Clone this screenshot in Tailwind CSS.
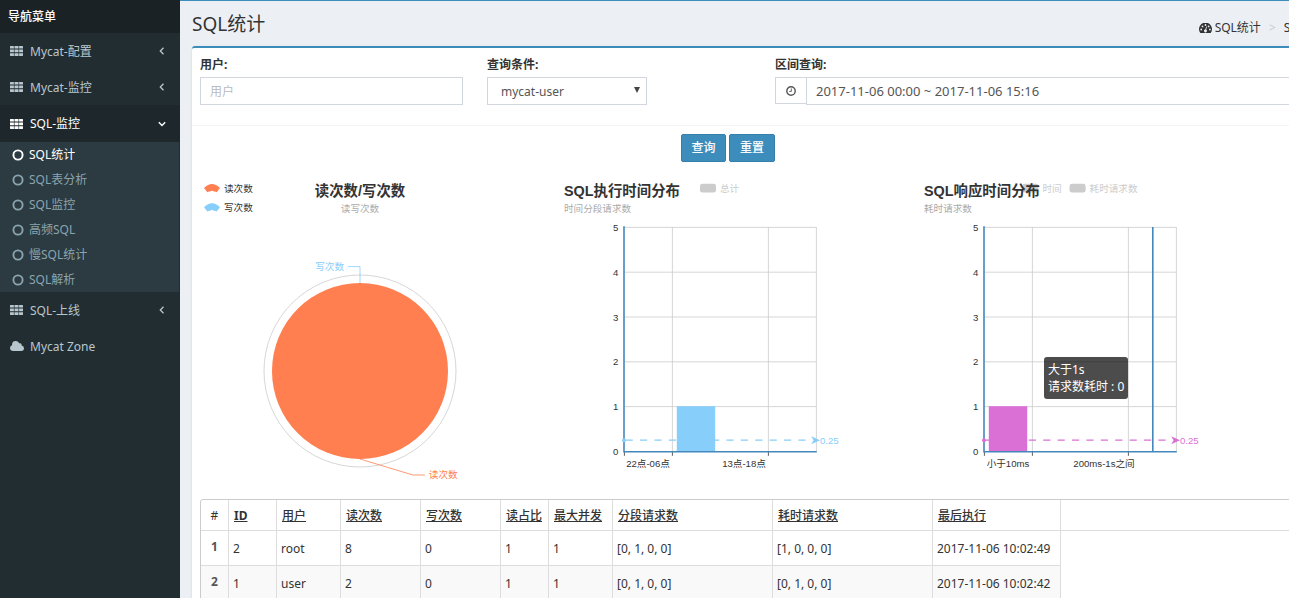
<!DOCTYPE html>
<html lang="zh-CN">
<head>
<meta charset="utf-8">
<title>SQL统计</title>
<script src="https://cdn.jsdelivr.net/npm/@tailwindcss/browser@4"></script>
</head>
<body class="flex min-h-screen overflow-x-hidden bg-[#ecf0f5] font-['Noto_Sans','Noto_Sans_CJK_SC',sans-serif] text-xs text-[#333]">
<svg class="hidden" aria-hidden="true">
  <symbol id="th" viewBox="0 0 13 10"><path fill="currentColor" d="M.5 0h3q.4 0 .4.4v2.200H0v-2Q0 0 .5 0zM4.500 0h4v2.600h-4zM9.100 0h3.400q.5 0 .5.4v2.200H9.100zM0 3.600h3.900v2.700H0zM4.500 3.600h4v2.700h-4zM9.100 3.600H13v2.700H9.100zM0 7.300h3.900V10H.5Q0 10 0 9.600zM4.500 7.300h4V10h-4zM9.100 7.300H13v2.300q0 .4-.5.4H9.100z"/></symbol>
  <symbol id="left" viewBox="0 0 8 8"><path fill="none" stroke="currentColor" stroke-width="1.300" d="M5.500 .8L2.300 4l3.200 3.200"/></symbol>
  <symbol id="down" viewBox="0 0 8 8"><path fill="none" stroke="currentColor" stroke-width="1.400" d="M.8 2.300L4 5.500l3.200-3.200"/></symbol>
  <symbol id="ring" viewBox="0 0 12 12"><circle cx="6" cy="6" r="4.600" fill="none" stroke="currentColor" stroke-width="1.900"/></symbol>
  <symbol id="fan" viewBox="0 0 20 11"><path fill="currentColor" d="M0 5.200Q10-4.500 20 5.200L15.500 11Q14.500 9 13 10Q10 7.500 7 10Q5.500 9 4.500 11z"/></symbol>
</svg>

<nav class="w-[180px] shrink-0 bg-[#222d32] text-[#b8c7ce]" aria-label="导航菜单">
  <div class="flex h-[33px] items-center bg-[#1a2226] px-2 font-medium text-white">导航菜单</div>
  <ul>
    <li><a href="#" class="flex h-9 items-center gap-[7px] pr-3.5 pl-2.5"><svg class="h-2.5 w-[13px]"><use href="#th"/></svg><span class="flex-1 pt-0.5">Mycat-配置</span><svg class="size-2"><use href="#left"/></svg></a></li>
    <li><a href="#" class="flex h-9 items-center gap-[7px] pr-3.5 pl-2.5"><svg class="h-2.5 w-[13px]"><use href="#th"/></svg><span class="flex-1 pt-0.5">Mycat-监控</span><svg class="size-2"><use href="#left"/></svg></a></li>
    <li>
      <a href="#" class="flex h-[37px] items-center gap-[7px] bg-[#1e282c] pr-3.5 pl-2.5 text-white"><svg class="h-2.5 w-[13px]"><use href="#th"/></svg><span class="flex-1">SQL-监控</span><svg class="size-2"><use href="#down"/></svg></a>
      <ul class="mr-px bg-[#2c3b41] text-[#8aa4af]">
        <li><a href="#" class="flex h-[25px] items-center gap-[5px] pl-3 text-white"><svg class="size-3"><use href="#ring"/></svg>SQL统计</a></li>
        <li><a href="#" class="flex h-[25px] items-center gap-[5px] pl-3"><svg class="size-3"><use href="#ring"/></svg>SQL表分析</a></li>
        <li><a href="#" class="flex h-[25px] items-center gap-[5px] pl-3"><svg class="size-3"><use href="#ring"/></svg>SQL监控</a></li>
        <li><a href="#" class="flex h-[25px] items-center gap-[5px] pl-3"><svg class="size-3"><use href="#ring"/></svg>高频SQL</a></li>
        <li><a href="#" class="flex h-[25px] items-center gap-[5px] pl-3"><svg class="size-3"><use href="#ring"/></svg>慢SQL统计</a></li>
        <li><a href="#" class="flex h-[25px] items-center gap-[5px] pl-3"><svg class="size-3"><use href="#ring"/></svg>SQL解析</a></li>
      </ul>
    </li>
    <li><a href="#" class="flex h-9 items-center gap-[7px] pr-3.5 pl-2.5"><svg class="h-2.5 w-[13px]"><use href="#th"/></svg><span class="flex-1 pt-0.5">SQL-上线</span><svg class="size-2"><use href="#left"/></svg></a></li>
    <li><a href="#" class="flex h-9 items-center gap-1.5 pl-2.5"><svg class="h-2.5 w-3.5" viewBox="0 0 14 10"><path fill="currentColor" d="M3 10Q0 9.800 0 7.100 0 5.100 2 4.300 1.900 0 5.700 0 8.200 0 9.200 2.300 11.700 1.500 11.700 4.500 14 5 14 7.200 14 9.800 11.200 10z"/></svg><span class="pt-0.5">Mycat Zone</span></a></li>
  </ul>
</nav>

<div class="min-w-0 flex-1 overflow-hidden border-t border-[#3c8dbc]">
  <div class="min-w-[1166px] px-3">
    <header class="flex h-[45px] items-center justify-between pr-1">
      <h1 class="pt-0.5 text-[19px]">SQL统计</h1>
      <ol class="flex items-center pt-2">
        <li><a href="#" class="flex items-center gap-[3px]"><svg class="h-2.5 w-[13px]" viewBox="0 0 13 10"><path fill="currentColor" d="M1.300 10A6.500 6.500 0 1 1 11.700 10z"/><g fill="#ecf0f5"><circle cx="2.200" cy="6.500" r=".9"/><circle cx="3.500" cy="3.400" r=".9"/><circle cx="6.500" cy="2" r=".9"/><circle cx="9.600" cy="3.400" r=".9"/><circle cx="10.900" cy="6.500" r=".9"/><path d="M7.100 3.600l.8.2-.7 2.900a1.400 1.400 0 1 1-.8-.2z"/></g></svg>SQL统计</a></li>
        <li class="px-2 text-[#ccc]">&gt;</li>
        <li>SQL统计</li>
      </ol>
    </header>

    <main class="rounded-t-[3px] border-t-2 border-[#3c8dbc] bg-white px-2 pb-4 shadow-sm">
      <form>
        <div class="-mx-2 grid h-[78px] grid-cols-[263px_264px_1fr] content-start gap-x-6 border-b border-[#f4f4f4] px-2 pt-2">
          <div>
            <label for="user" class="block h-[21px] leading-[18px] font-bold">用户:</label>
            <input id="user" type="text" placeholder="用户" class="h-7 w-full border border-[#d2d6de] px-[9px] text-[#555] placeholder:text-[#bbb]">
          </div>
          <div>
            <label for="cond" class="block h-[21px] leading-[18px] font-bold">查询条件:</label>
            <div class="relative w-40">
              <select id="cond" class="h-7 w-full appearance-none border border-[#d2d6de] bg-white px-[13px] pt-0.5 text-[#555]"><option>mycat-user</option></select>
              <svg class="pointer-events-none absolute top-2.5 right-[7px] h-1.5 w-1.5" viewBox="0 0 6 6"><path fill="#444" d="M0 0h6L3 6z"/></svg>
            </div>
          </div>
          <div>
            <label for="range" class="block h-[21px] leading-[18px] font-bold">区间查询:</label>
            <div class="flex items-start">
              <span class="flex h-[27px] w-[31px] items-center justify-center border border-r-0 border-[#d2d6de]"><svg class="size-2.5" viewBox="0 0 10 10" fill="none" stroke="#555"><circle cx="5" cy="5" r="4.200" stroke-width="1.400"/><path d="M5.300 2.500v3H3.300" stroke-width=".9"/></svg></span>
              <input id="range" type="text" value="2017-11-06 00:00 ~ 2017-11-06 15:16" class="h-7 flex-1 border border-[#d2d6de] px-[9px] text-[13px] text-[#555]">
            </div>
          </div>
        </div>
        <div class="flex gap-[3px] pt-2 pl-[481px] text-white">
          <button type="button" class="h-7 w-[45px] rounded-xs border border-[#367fa9] bg-[#3c8dbc] font-medium">查询</button>
          <button type="reset" class="h-7 w-[46px] rounded-xs border border-[#367fa9] bg-[#3c8dbc] font-medium">重置</button>
        </div>
      </form>

      <section class="flex gap-10 pt-[17px] font-['Liberation_Sans','Noto_Sans_CJK_SC',sans-serif]">
        <svg class="size-80 shrink-0" viewBox="0 0 400 400" font-size="12" role="img" aria-label="读次数/写次数">
          <use href="#fan" x="5" y="6" width="20" height="11" class="text-[#ff7f50]"/>
          <use href="#fan" x="5" y="30" width="20" height="11" class="text-[#87cefa]"/>
          <text x="30" y="16" fill="#333">读次数</text>
          <text x="30" y="40" fill="#333">写次数</text>
          <text x="200" y="21" text-anchor="middle" font-size="18" font-weight="bold" fill="#333">读次数/写次数</text>
          <text x="200" y="41" text-anchor="middle" fill="#aaa">读写次数</text>
          <circle cx="200" cy="240" r="120" fill="none" stroke="#ccc"/>
          <circle cx="200" cy="240" r="110" fill="#ff7f50"/>
          <path d="M185 109.500H200V130" fill="none" stroke="#87cefa"/>
          <path d="M200 350L266 370H281" fill="none" stroke="#ff7f50"/>
          <text x="180" y="114" text-anchor="end" fill="#87cefa">写次数</text>
          <text x="286" y="374" fill="#ff7f50">读次数</text>
        </svg>

        <svg class="size-80 shrink-0 overflow-visible" viewBox="0 0 400 400" font-size="12" role="img" aria-label="SQL执行时间分布">
          <rect x="175" y="6" width="20" height="11" rx="3" fill="#ccc"/>
          <text x="200" y="16" fill="#ccc">总计</text>
          <text x="5" y="21" font-size="18" font-weight="bold" fill="#333">SQL执行时间分布</text>
          <text x="5" y="41" fill="#aaa">时间分段请求数</text>
          <path d="M80 60.500H320M80 116.500H320M80 172.500H320M80 228.500H320M80 284.500H320M140.500 60V340M260.500 60V340M320.500 60V340" fill="none" stroke="#ccc"/>
          <path d="M80.500 340V346M140.500 340V346M260.500 340V346" stroke="#333"/>
          <path d="M80 59V341H321" fill="none" stroke="#48b" stroke-width="2"/>
          <g text-anchor="end" fill="#333"><text x="73" y="65">5</text><text x="73" y="121">4</text><text x="73" y="177">3</text><text x="73" y="233">2</text><text x="73" y="289">1</text><text x="73" y="345">0</text></g>
          <g text-anchor="middle" fill="#333"><text x="110" y="360">22点-06点</text><text x="230" y="360">13点-18点</text></g>
          <g fill="#87cefa">
            <path d="M82 326.500H316" stroke="#87cefa" stroke-width="1.500" stroke-dasharray="9 9"/>
            <rect x="146" y="284" width="48" height="56"/>
            <circle cx="80" cy="326.500" r="2.500"/>
            <path d="M314 321.500L325 326.500L314 331.500L317 326.500z"/>
            <text x="325" y="331">0.25</text>
          </g>
        </svg>

        <div class="relative shrink-0">
          <svg class="size-80 overflow-visible" viewBox="0 0 400 400" font-size="12" role="img" aria-label="SQL响应时间分布">
            <rect x="128" y="6" width="20" height="11" rx="3" fill="#ccc"/>
            <text x="153" y="16" fill="#ccc">时间</text>
            <rect x="187" y="6" width="20" height="11" rx="3" fill="#ccc"/>
            <text x="212" y="16" fill="#ccc">耗时请求数</text>
            <text x="5" y="21" font-size="18" font-weight="bold" fill="#333">SQL响应时间分布</text>
            <text x="5" y="41" fill="#aaa">耗时请求数</text>
            <path d="M80 60.500H320M80 116.500H320M80 172.500H320M80 228.500H320M80 284.500H320M140.500 60V340M260.500 60V340M320.500 60V340" fill="none" stroke="#ccc"/>
            <path d="M80.500 340V346M140.500 340V346M260.500 340V346" stroke="#333"/>
            <path d="M80 59V341H321M291 60V340" fill="none" stroke="#48b" stroke-width="2"/>
            <g text-anchor="end" fill="#333"><text x="73" y="65">5</text><text x="73" y="121">4</text><text x="73" y="177">3</text><text x="73" y="233">2</text><text x="73" y="289">1</text><text x="73" y="345">0</text></g>
            <g text-anchor="middle" fill="#333"><text x="110" y="360">小于10ms</text><text x="230" y="360">200ms-1s之间</text></g>
            <g fill="#da70d6">
              <path d="M82 326.500H316" stroke="#da70d6" stroke-width="1.500" stroke-dasharray="9 9"/>
              <rect x="86" y="284" width="48" height="56"/>
              <circle cx="80" cy="326.500" r="2.500"/>
              <path d="M314 321.500L325 326.500L314 331.500L317 326.500z"/>
              <text x="325" y="331">0.25</text>
            </g>
          </svg>
          <div role="tooltip" class="absolute top-[178px] left-[124px] rounded-[3px] bg-black/70 p-1 font-['Noto_Sans','Noto_Sans_CJK_SC',sans-serif] text-xs leading-[17px] whitespace-nowrap text-white">大于1s<br>请求数耗时 : 0</div>
        </div>
      </section>

      <div class="overflow-hidden rounded-[3px] border border-[#ccc]">
        <table class="w-full table-fixed border-separate border-spacing-0 text-left [&_td]:border-[#ddd] [&_td:not(:first-child)]:pt-0.5 [&_td:not(:last-child)]:border-r [&_td:not(:last-child)]:border-b [&_td]:px-1 [&_th]:border-b [&_th]:border-[#ddd] [&_th]:px-[5px] [&_th]:pt-0.5 [&_th:not(:first-child)]:underline [&_th:not(:last-child)]:border-r">
          <colgroup><col class="w-7"><col class="w-12"><col class="w-16"><col class="w-20"><col class="w-20"><col class="w-12"><col class="w-16"><col class="w-40"><col class="w-40"><col class="w-32"><col></colgroup>
          <thead>
            <tr class="h-[31px] whitespace-nowrap">
              <th class="text-center font-normal">#</th><th>ID</th><th class="font-medium">用户</th><th class="font-medium">读次数</th><th class="font-medium">写次数</th><th class="font-medium">读占比</th><th class="font-medium">最大并发</th><th class="font-medium">分段请求数</th><th class="font-medium">耗时请求数</th><th class="font-medium">最后执行</th><th></th>
            </tr>
          </thead>
          <tbody class="whitespace-nowrap">
            <tr class="h-[35px]"><td class="pb-0.5 text-center font-bold text-[#555]">1</td><td>2</td><td>root</td><td>8</td><td>0</td><td>1</td><td>1</td><td>[0, 1, 0, 0]</td><td>[1, 0, 0, 0]</td><td>2017-11-06 10:02:49</td><td></td></tr>
            <tr class="h-[35px] bg-[#f9f9f9]"><td class="pb-0.5 text-center font-bold text-[#555]">2</td><td>1</td><td>user</td><td>2</td><td>0</td><td>1</td><td>1</td><td>[0, 1, 0, 0]</td><td>[0, 1, 0, 0]</td><td>2017-11-06 10:02:42</td><td class="bg-white"></td></tr>
          </tbody>
        </table>
      </div>
    </main>
  </div>
</div>
</body>
</html>
